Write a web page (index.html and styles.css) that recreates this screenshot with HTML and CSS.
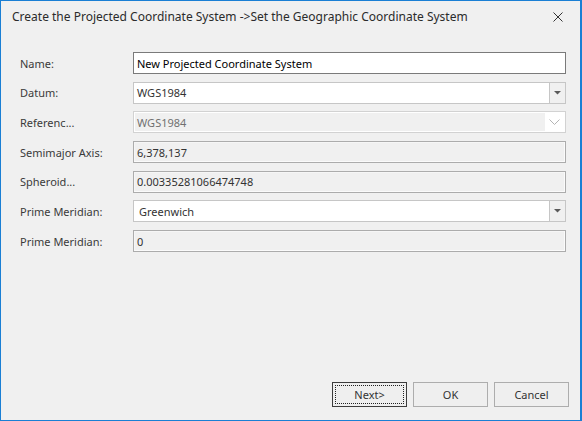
FILE: index.html
```html
<!DOCTYPE html>
<html>
<head>
<meta charset="utf-8">
<link rel="stylesheet" href="styles.css">
</head>
<body>
<div class="window">
  <div class="titlebar">
    <span class="title">Create the Projected Coordinate System -&gt;Set the Geographic Coordinate System</span>
    <span class="close">
      <svg width="10" height="10" viewBox="0 0 10 10"><path d="M0.5 0.5 L9.5 9.5 M9.5 0.5 L0.5 9.5" stroke="#333" stroke-width="1" fill="none"/></svg>
    </span>
  </div>
  <div class="form">
    <label class="label">Name:</label>
    <div class="field field-focus"><span class="value value-black">New Projected Coordinate System</span></div>

    <label class="label">Datum:</label>
    <div class="field combo">
      <span class="value">WGS1984</span>
      <span class="combo-btn"><svg width="7" height="4" viewBox="0 0 7 4"><polygon points="0,0 7,0 3.5,3.5" fill="#5a5a5a"/></svg></span>
    </div>

    <label class="label">Referenc...</label>
    <div class="field combo-disabled">
      <span class="value value-disabled">WGS1984</span>
      <span class="chevron"><svg width="11" height="6" viewBox="0 0 11 6"><path d="M0.5 0.5 L5.5 5.5 L10.5 0.5" stroke="#b4b4b4" stroke-width="1" fill="none"/></svg></span>
    </div>

    <label class="label">Semimajor Axis:</label>
    <div class="field readonly"><span class="value">6,378,137</span></div>

    <label class="label">Spheroid...</label>
    <div class="field readonly"><span class="value">0.00335281066474748</span></div>

    <label class="label">Prime Meridian:</label>
    <div class="field combo">
      <span class="value value-indent">Greenwich</span>
      <span class="combo-btn"><svg width="7" height="4" viewBox="0 0 7 4"><polygon points="0,0 7,0 3.5,3.5" fill="#5a5a5a"/></svg></span>
    </div>

    <label class="label">Prime Meridian:</label>
    <div class="field readonly"><span class="value">0</span></div>
  </div>
  <div class="spacer"></div>
  <div class="buttons">
    <button class="btn btn-default"><span class="focus-ring">Next&gt;</span></button>
    <button class="btn">OK</button>
    <button class="btn">Cancel</button>
  </div>
</div>
</body>
</html>
```

FILE: styles.css
```css
html, body {
  margin: 0;
  padding: 0;
  background: #f0f0f0;
}

.window {
  width: 582px;
  height: 421px;
  box-sizing: border-box;
  border: 1px solid #1a7fd4;
  border-right-width: 2px;
  background: #f0f0f0;
  display: flex;
  flex-direction: column;
  font-family: "Noto Sans", "DejaVu Sans", sans-serif;
  color: #333;
}

.titlebar {
  height: 31px;
  display: flex;
  align-items: center;
  padding-left: 11px;
  padding-right: 17px;
}

.title {
  flex: 1;
  font-size: 12px;
  color: #2b2b2b;
  white-space: nowrap;
}

.close {
  display: flex;
  width: 10px;
  height: 10px;
}

.form {
  display: grid;
  grid-template-columns: 113px 433px;
  grid-auto-rows: 22px;
  row-gap: 7.7px;
  padding-top: 20px;
  padding-left: 19px;
  align-items: center;
}

.label {
  font-size: 11px;
  color: #3a3a3a;
  white-space: nowrap;
}

.field {
  height: 22px;
  box-sizing: border-box;
  display: flex;
  align-items: center;
  font-size: 11px;
  color: #333;
  overflow: hidden;
}

.value {
  padding-left: 3px;
  white-space: nowrap;
}

.value-indent {
  padding-left: 5px;
}

.value-black {
  color: #000;
}

.value-disabled {
  color: #707070;
}

.field-focus {
  background: #fff;
  border: 1px solid #7a7a7a;
}

.combo {
  background: #fff;
  border: 1px solid #c6c6c6;
}

.combo .value {
  flex: 1;
}

.combo-btn {
  width: 16px;
  height: 100%;
  box-sizing: border-box;
  border-left: 1px solid #c6c6c6;
  background: #f0f0f0;
  display: flex;
  align-items: center;
  justify-content: center;
}

.combo-disabled {
  background: #fff;
  border: 1px solid #d2d2d2;
  padding: 1px;
}

.combo-disabled .value {
  flex: 1;
  background: #f0f0f0;
  height: 100%;
  display: flex;
  align-items: center;
  padding-left: 2px;
}

.chevron {
  width: 19px;
  display: flex;
  align-items: center;
  justify-content: center;
}

.readonly {
  background: #f0f0f0;
  border: 1px solid #acacac;
  box-shadow: inset -1px -1px 0 #fbfbfb, inset 1px 1px 0 #f6f6f6;
}

.spacer {
  flex: 1;
}

.buttons {
  display: flex;
  justify-content: flex-end;
  gap: 6px;
  padding-right: 11px;
  padding-bottom: 13px;
}

.btn {
  width: 75px;
  height: 25px;
  box-sizing: border-box;
  border: 1px solid #adadad;
  background: #efefef;
  font-family: "Noto Sans", "DejaVu Sans", sans-serif;
  font-size: 11px;
  color: #333;
  padding: 0;
  margin: 0;
  display: flex;
  align-items: center;
  justify-content: center;
}

.btn-default {
  border-color: #3c3c3c;
  padding: 2px;
}

.focus-ring {
  width: 100%;
  height: 100%;
  box-sizing: border-box;
  border: 1px dotted #222;
  display: flex;
  align-items: center;
  justify-content: center;
}
```
